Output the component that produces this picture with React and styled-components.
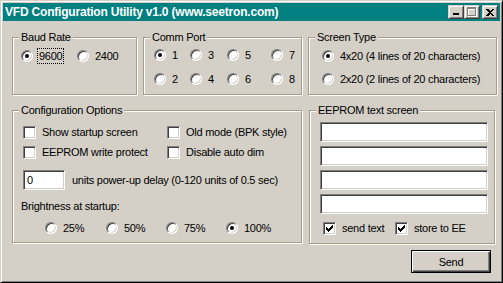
import React from 'react'
import styled, { createGlobalStyle } from 'styled-components'

const GlobalStyle = createGlobalStyle`
  html, body { margin: 0; padding: 0; background: #d4d0c8; }
  body { font-family: "Liberation Sans", Arial, sans-serif; font-size: 11px; letter-spacing: -0.25px; color: #000; }
`;

const Window = styled.div`
  width: 503px;
  height: 283px;
  box-sizing: border-box;
  background: #d4d0c8;
  border: 1px solid;
  border-color: #d4d0c8 #000 #000 #d4d0c8;
  box-shadow: inset 1px 1px #fff, inset -1px -1px #808080;
  padding: 2px;
  display: flex;
  flex-direction: column;
`;

const TitleBar = styled.div`
  height: 18px;
  background: #008080;
  display: flex;
  align-items: center;
  padding: 0 2px 0 2px;
  flex-shrink: 0;
`;

const TitleText = styled.div`
  flex: 1;
  color: #fff;
  font-weight: bold;
  font-size: 12px;
  letter-spacing: -0.2px;
  line-height: 18px;
  white-space: nowrap;
`;

const CaptionButton = styled.div`
  width: 16px;
  height: 14px;
  box-sizing: border-box;
  background: #d4d0c8;
  border: 1px solid;
  border-color: #d4d0c8 #404040 #404040 #d4d0c8;
  box-shadow: inset 1px 1px #fff, inset -1px -1px #808080;
  margin-left: ${(p) => p.$gap || 0}px;
  display: flex;
  align-items: center;
  justify-content: center;
  svg { display: block; }
`;

const Body = styled.div`
  flex: 1;
  padding: 16px 9px 0 9px;
  display: flex;
  flex-direction: column;
`;

const Row = styled.div`
  display: grid;
  grid-template-columns: ${(p) => p.$cols};
  column-gap: ${(p) => p.$gap}px;
  align-items: start;
  margin-top: ${(p) => p.$top || 0}px;
`;

const GroupBox = styled.div`
  box-sizing: border-box;
  height: ${(p) => p.$h}px;
  border: 1px solid #a89c84;
  box-shadow: inset 1px 1px #fff, 1px 1px #fff;
  display: flex;
  flex-direction: column;
`;

const Caption = styled.div`
  align-self: flex-start;
  margin: -7px 0 0 6px;
  padding: 0 2px;
  background: #d4d0c8;
  line-height: 13px;
  white-space: nowrap;
`;

const OptionGrid = styled.div`
  display: grid;
  grid-template-columns: ${(p) => p.$cols};
  row-gap: ${(p) => p.$rowGap || 0}px;
  margin: ${(p) => p.$top || 0}px 0 0 ${(p) => p.$left || 0}px;
`;

const Option = styled.label`
  display: flex;
  align-items: center;
  height: 16px;
  white-space: nowrap;
`;

const Radio = styled.span`
  position: relative;
  width: 12px;
  height: 12px;
  box-sizing: border-box;
  flex-shrink: 0;
  border-radius: 50%;
  background: #fff;
  border: 1px solid;
  border-color: #808080 #fff #fff #808080;
  box-shadow: inset 1px 1px #404040, inset -1px -1px #d4d0c8;
  &::after {
    content: '';
    display: ${(p) => (p.$on ? 'block' : 'none')};
    position: absolute;
    left: 3px;
    top: 3px;
    width: 4px;
    height: 4px;
    border-radius: 50%;
    background: #000;
  }
`;

const RadioText = styled.span`
  margin-left: 4px;
  padding: 0 1px;
  line-height: 14px;
  border: 1px dotted ${(p) => (p.$focus ? '#000' : 'transparent')};
`;

const Check = styled.span`
  width: 13px;
  height: 13px;
  box-sizing: border-box;
  flex-shrink: 0;
  background: #fff;
  border: 1px solid;
  border-color: #808080 #fff #fff #808080;
  box-shadow: inset 1px 1px #404040, inset -1px -1px #d4d0c8;
  display: flex;
  align-items: center;
  justify-content: center;
  svg { display: block; }
`;

const CheckText = styled.span`
  margin-left: 6px;
`;

const Field = styled.div`
  box-sizing: border-box;
  width: ${(p) => p.$w}px;
  height: 20px;
  background: #fff;
  border: 1px solid;
  border-color: #808080 #fff #fff #808080;
  box-shadow: inset 1px 1px #404040, inset -1px -1px #d4d0c8;
  padding: 0 3px;
  line-height: 18px;
`;

const DelayRow = styled.div`
  display: flex;
  align-items: center;
  margin: 10px 0 0 2px;
`;

const DelayText = styled.span`
  margin-left: 7px;
`;

const PlainText = styled.div`
  line-height: 13px;
  margin-top: ${(p) => p.$top || 0}px;
`;

const FieldStack = styled.div`
  display: flex;
  flex-direction: column;
  gap: 4px;
  margin: 5px 0 0 10px;
`;

const ConfigBody = styled.div`
  padding-left: 8px;
`;

const Footer = styled.div`
  display: flex;
  justify-content: flex-end;
  margin-top: 6px;
`;

const Button = styled.div`
  width: 80px;
  height: 23px;
  box-sizing: border-box;
  border: 1px solid #000;
  background: #d4d0c8;
  box-shadow: inset 1px 1px #fff, inset -1px -1px #404040, inset -2px -2px #808080;
  display: flex;
  align-items: center;
  justify-content: center;
`;

const CheckMark = () => (
  <svg width="7" height="7" viewBox="0 0 7 7" shapeRendering="crispEdges">
    <polygon points="0,2 2,4 7,-1 7,2 2,7 0,5" fill="#000" />
  </svg>
);

const RadioOption = ({ label, on, focus }) => (
  <Option>
    <Radio $on={on} />
    <RadioText $focus={focus}>{label}</RadioText>
  </Option>
);

const CheckOption = ({ label, on }) => (
  <Option>
    <Check>{on && <CheckMark />}</Check>
    <CheckText>{label}</CheckText>
  </Option>
);

export default function App() {
  return (
    <>
      <GlobalStyle />
      <Window>
        <TitleBar>
          <TitleText>VFD Configuration Utility v1.0 (www.seetron.com)</TitleText>
          <CaptionButton>
            <svg width="8" height="8" viewBox="0 0 8 8" shapeRendering="crispEdges">
              <rect x="1" y="5" width="6" height="2" fill="#000" />
            </svg>
          </CaptionButton>
          <CaptionButton>
            <svg width="10" height="10" viewBox="0 0 10 10" shapeRendering="crispEdges">
              <g fill="none" stroke="#fff">
                <rect x="1.5" y="1.5" width="8" height="8" />
                <line x1="1" y1="2.5" x2="10" y2="2.5" />
              </g>
              <g fill="none" stroke="#808080">
                <rect x="0.5" y="0.5" width="8" height="8" />
                <line x1="0" y1="1.5" x2="9" y2="1.5" />
              </g>
            </svg>
          </CaptionButton>
          <CaptionButton $gap={2}>
            <svg width="8" height="7" viewBox="0 0 8 7" shapeRendering="crispEdges">
              <path d="M0 0h2l2 2 2-2h2L5 3.5 8 7H6L4 5 2 7H0l3-3.5z" fill="#000" />
            </svg>
          </CaptionButton>
        </TitleBar>
        <Body>
          <Row $cols="125px 159px 189px" $gap={6}>
            <GroupBox $h={58}>
              <Caption>Baud Rate</Caption>
              <OptionGrid $cols="56px auto" $top={4} $left={8}>
                <RadioOption label="9600" on focus />
                <RadioOption label="2400" />
              </OptionGrid>
            </GroupBox>
            <GroupBox $h={58}>
              <Caption>Comm Port</Caption>
              <OptionGrid $cols="36px 37px 44px auto" $top={3} $left={10} $rowGap={8}>
                <RadioOption label="1" on />
                <RadioOption label="3" />
                <RadioOption label="5" />
                <RadioOption label="7" />
                <RadioOption label="2" />
                <RadioOption label="4" />
                <RadioOption label="6" />
                <RadioOption label="8" />
              </OptionGrid>
            </GroupBox>
            <GroupBox $h={58}>
              <Caption>Screen Type</Caption>
              <OptionGrid $cols="auto" $top={4} $left={13} $rowGap={7}>
                <RadioOption label="4x20 (4 lines of 20 characters)" on />
                <RadioOption label="2x20 (2 lines of 20 characters)" />
              </OptionGrid>
            </GroupBox>
          </Row>
          <Row $cols="290px 186px" $gap={7} $top={15}>
            <GroupBox $h={133}>
              <Caption>Configuration Options</Caption>
              <ConfigBody>
                <OptionGrid $cols="144px auto" $top={7} $left={2} $rowGap={4}>
                  <CheckOption label="Show startup screen" />
                  <CheckOption label="Old mode (BPK style)" />
                  <CheckOption label="EEPROM write protect" />
                  <CheckOption label="Disable auto dim" />
                </OptionGrid>
                <DelayRow>
                  <Field $w={42}>0</Field>
                  <DelayText>units power-up delay (0-120 units of 0.5 sec)</DelayText>
                </DelayRow>
                <PlainText $top={10}>Brightness at startup:</PlainText>
                <OptionGrid $cols="61px 60px 60px auto" $top={7} $left={24}>
                  <RadioOption label="25%" />
                  <RadioOption label="50%" />
                  <RadioOption label="75%" />
                  <RadioOption label="100%" on />
                </OptionGrid>
              </ConfigBody>
            </GroupBox>
            <GroupBox $h={134}>
              <Caption>EEPROM text screen</Caption>
              <FieldStack>
                <Field $w={168} />
                <Field $w={168} />
                <Field $w={168} />
                <Field $w={168} />
              </FieldStack>
              <OptionGrid $cols="72px auto" $top={6} $left={13}>
                <CheckOption label="send text" on />
                <CheckOption label="store to EE" on />
              </OptionGrid>
            </GroupBox>
          </Row>
          <Footer>
            <Button>Send</Button>
          </Footer>
        </Body>
      </Window>
    </>
  );
}
